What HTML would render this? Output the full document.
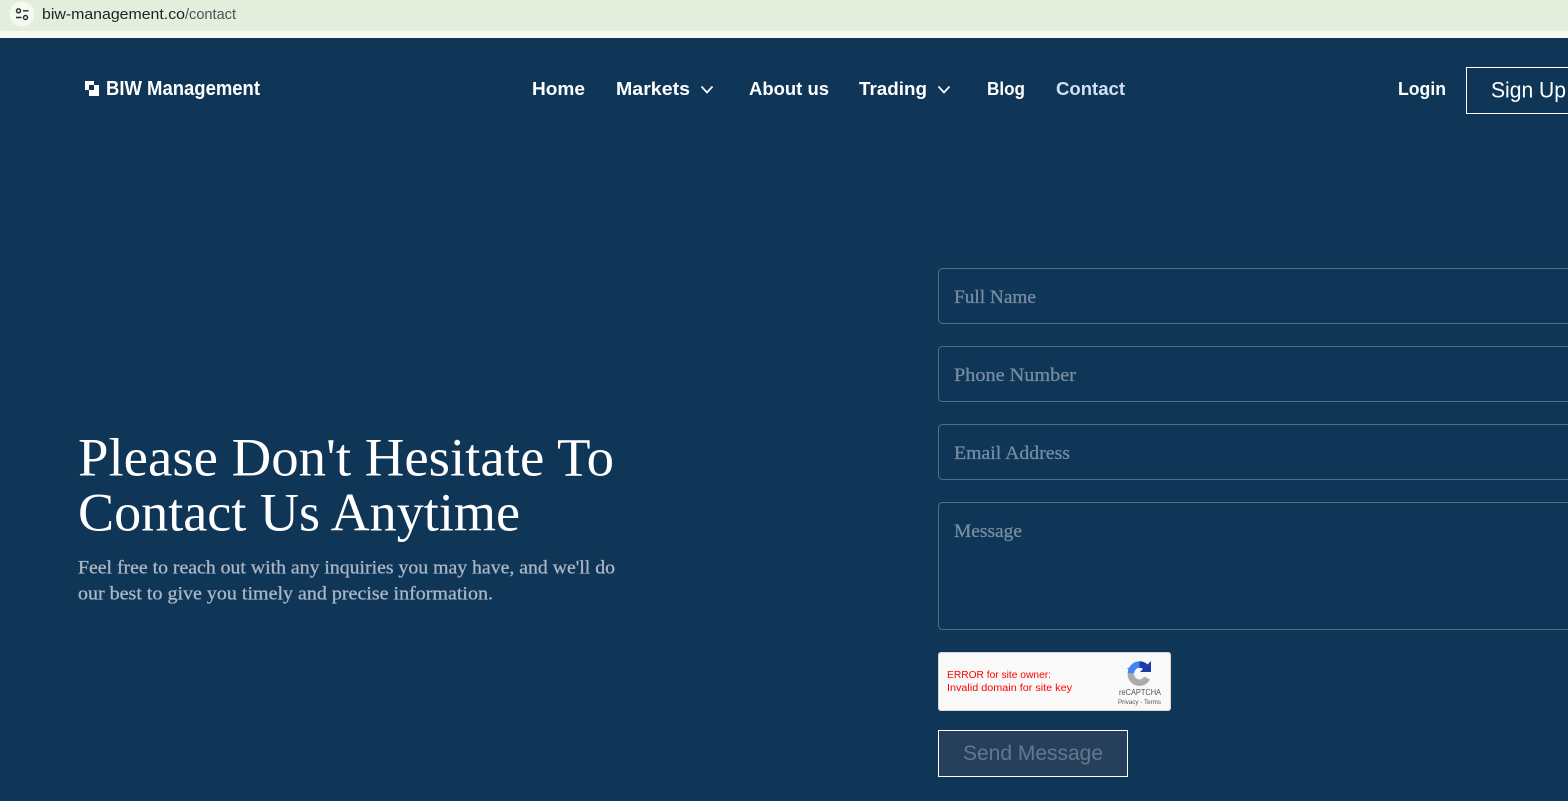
<!DOCTYPE html>
<html lang="en">
<head>
<meta charset="utf-8">
<title>BIW Management - Contact</title>
<style>
html,body{margin:0;padding:0;width:1568px;height:801px;overflow:hidden;background:#0f3557}
svg{display:block}
.sans{font-family:"Liberation Sans",Arial,sans-serif}
.serif{font-family:"Liberation Serif","Times New Roman",serif}
</style>
</head>
<body>
<svg width="1568" height="801" viewBox="0 0 1568 801" xmlns="http://www.w3.org/2000/svg">
  <rect width="1568" height="801" fill="#0f3557"/>
  <!-- browser bar -->
  <rect width="1568" height="38" fill="#f5f9ef"/>
  <rect x="0" y="0" width="1568" height="31" fill="#e4eedd"/>
  <circle cx="22" cy="14" r="12.5" fill="#f5f9ef"/>
  <circle cx="18.5" cy="10.8" r="2" fill="none" stroke="#22282b" stroke-width="1.4"/>
  <path d="M23 10.8H28.5M16 17.5H21.5" stroke="#22282b" stroke-width="1.4" fill="none"/>
  <circle cx="25.5" cy="17.5" r="2" fill="none" stroke="#22282b" stroke-width="1.4"/>
  <text class="sans" x="42" y="19" font-size="14.5" fill="#1d2326" textLength="143" lengthAdjust="spacingAndGlyphs">biw-management.co</text>
  <text class="sans" x="185" y="19" font-size="14.5" fill="#4b5356" textLength="51" lengthAdjust="spacingAndGlyphs">/contact</text>

  <!-- logo -->
  <path d="M85 81H94V85H89V90H85Z" fill="#fff"/>
  <path d="M94 85H99V96H89V90H94Z" fill="#fff"/>

  <text class="sans" x="106" y="95" font-size="20" font-weight="700" fill="#fff" textLength="154" lengthAdjust="spacingAndGlyphs">BIW Management</text>

  <!-- nav -->
  <g class="sans" font-size="18.5" font-weight="700" fill="#fff">
    <text x="532" y="95" textLength="53" lengthAdjust="spacingAndGlyphs">Home</text>
    <text x="616" y="95" textLength="74" lengthAdjust="spacingAndGlyphs">Markets</text>
    <text x="749" y="95" textLength="80" lengthAdjust="spacingAndGlyphs">About us</text>
    <text x="859" y="95" textLength="68" lengthAdjust="spacingAndGlyphs">Trading</text>
    <text x="987" y="95" textLength="38" lengthAdjust="spacingAndGlyphs">Blog</text>
    <text x="1056" y="95" fill="#cfe0f5" textLength="69" lengthAdjust="spacingAndGlyphs">Contact</text>
    <text x="1398" y="95" textLength="48" lengthAdjust="spacingAndGlyphs">Login</text>
  </g>
  <path d="M701.5 86.5L707 92.5L712.5 86.5" fill="none" stroke="#fff" stroke-width="1.7"/>
  <path d="M938.5 86.5L944 92.5L949.5 86.5" fill="none" stroke="#fff" stroke-width="1.7"/>

  <!-- sign up -->
  <rect x="1466.5" y="67.5" width="120" height="46" fill="none" stroke="#fff" stroke-width="1"/>
  <text class="sans" x="1491" y="97.5" font-size="22" fill="#fff" textLength="75" lengthAdjust="spacingAndGlyphs">Sign Up</text>

  <!-- hero -->
  <text class="serif" x="78" y="475.5" font-size="54" fill="#fff" textLength="536" lengthAdjust="spacingAndGlyphs">Please Don't Hesitate To</text>
  <text class="serif" x="78" y="530.5" font-size="54" fill="#fff" textLength="442" lengthAdjust="spacingAndGlyphs">Contact Us Anytime</text>
  <text class="serif" x="78" y="573.5" font-size="19" fill="#a9b7c6" stroke="#a9b7c6" stroke-width="0.3" textLength="537" lengthAdjust="spacingAndGlyphs">Feel free to reach out with any inquiries you may have, and we'll do</text>
  <text class="serif" x="78" y="599.5" font-size="19" fill="#a9b7c6" stroke="#a9b7c6" stroke-width="0.3" textLength="415" lengthAdjust="spacingAndGlyphs">our best to give you timely and precise information.</text>

  <!-- form -->
  <g fill="none" stroke="#4f6f8d" stroke-width="1">
    <rect x="938.5" y="268.5" width="700" height="55" rx="4"/>
    <rect x="938.5" y="346.5" width="700" height="55" rx="4"/>
    <rect x="938.5" y="424.5" width="700" height="55" rx="4"/>
    <rect x="938.5" y="502.5" width="700" height="127" rx="4"/>
  </g>
  <g class="serif" font-size="19" fill="#768ca2" stroke="#768ca2" stroke-width="0.3">
    <text x="954" y="303" textLength="82" lengthAdjust="spacingAndGlyphs">Full Name</text>
    <text x="954" y="381" textLength="122" lengthAdjust="spacingAndGlyphs">Phone Number</text>
    <text x="954" y="459" textLength="116" lengthAdjust="spacingAndGlyphs">Email Address</text>
    <text x="954" y="537" textLength="68" lengthAdjust="spacingAndGlyphs">Message</text>
  </g>

  <!-- recaptcha -->
  <rect x="938" y="652" width="233" height="59" rx="3" fill="#f9f9f9"/>
  <rect x="938.5" y="652.5" width="232" height="58" rx="3" fill="none" stroke="#d6d6d6" stroke-width="1"/>
  <text class="sans" x="947" y="678" font-size="10.5" fill="#ff0000" textLength="104" lengthAdjust="spacingAndGlyphs">ERROR for site owner:</text>
  <text class="sans" x="947" y="691" font-size="10.5" fill="#ff0000" textLength="125" lengthAdjust="spacingAndGlyphs">Invalid domain for site key</text>
  <path d="M1131 673A8.5 8.5 0 0 0 1147 678" fill="none" stroke="#ababab" stroke-width="6.5"/>
  <path d="M1131 673A8.5 8.5 0 0 1 1139.5 664.5" fill="none" stroke="#4285f4" stroke-width="6.5"/>
  <path d="M1127 668H1137L1132 674Z" fill="#4285f4"/>
  <path d="M1139.5 664.5A8.5 8.5 0 0 1 1146 667.5" fill="none" stroke="#1c3aa9" stroke-width="6.5"/>
  <path d="M1151 661V672H1140Z" fill="#1c3aa9"/>
  <text class="sans" x="1119" y="695" font-size="8" fill="#555" textLength="42" lengthAdjust="spacingAndGlyphs">reCAPTCHA</text>
  <text class="sans" x="1118" y="704" font-size="6" fill="#555" textLength="43" lengthAdjust="spacingAndGlyphs">Privacy - Terms</text>

  <!-- send -->
  <rect x="938.5" y="730.5" width="189" height="46" fill="#26405c" stroke="#fff" stroke-width="1"/>
  <text class="sans" x="963" y="760" font-size="21" fill="#64788c" textLength="140" lengthAdjust="spacingAndGlyphs">Send Message</text>
</svg>
</body>
</html>
